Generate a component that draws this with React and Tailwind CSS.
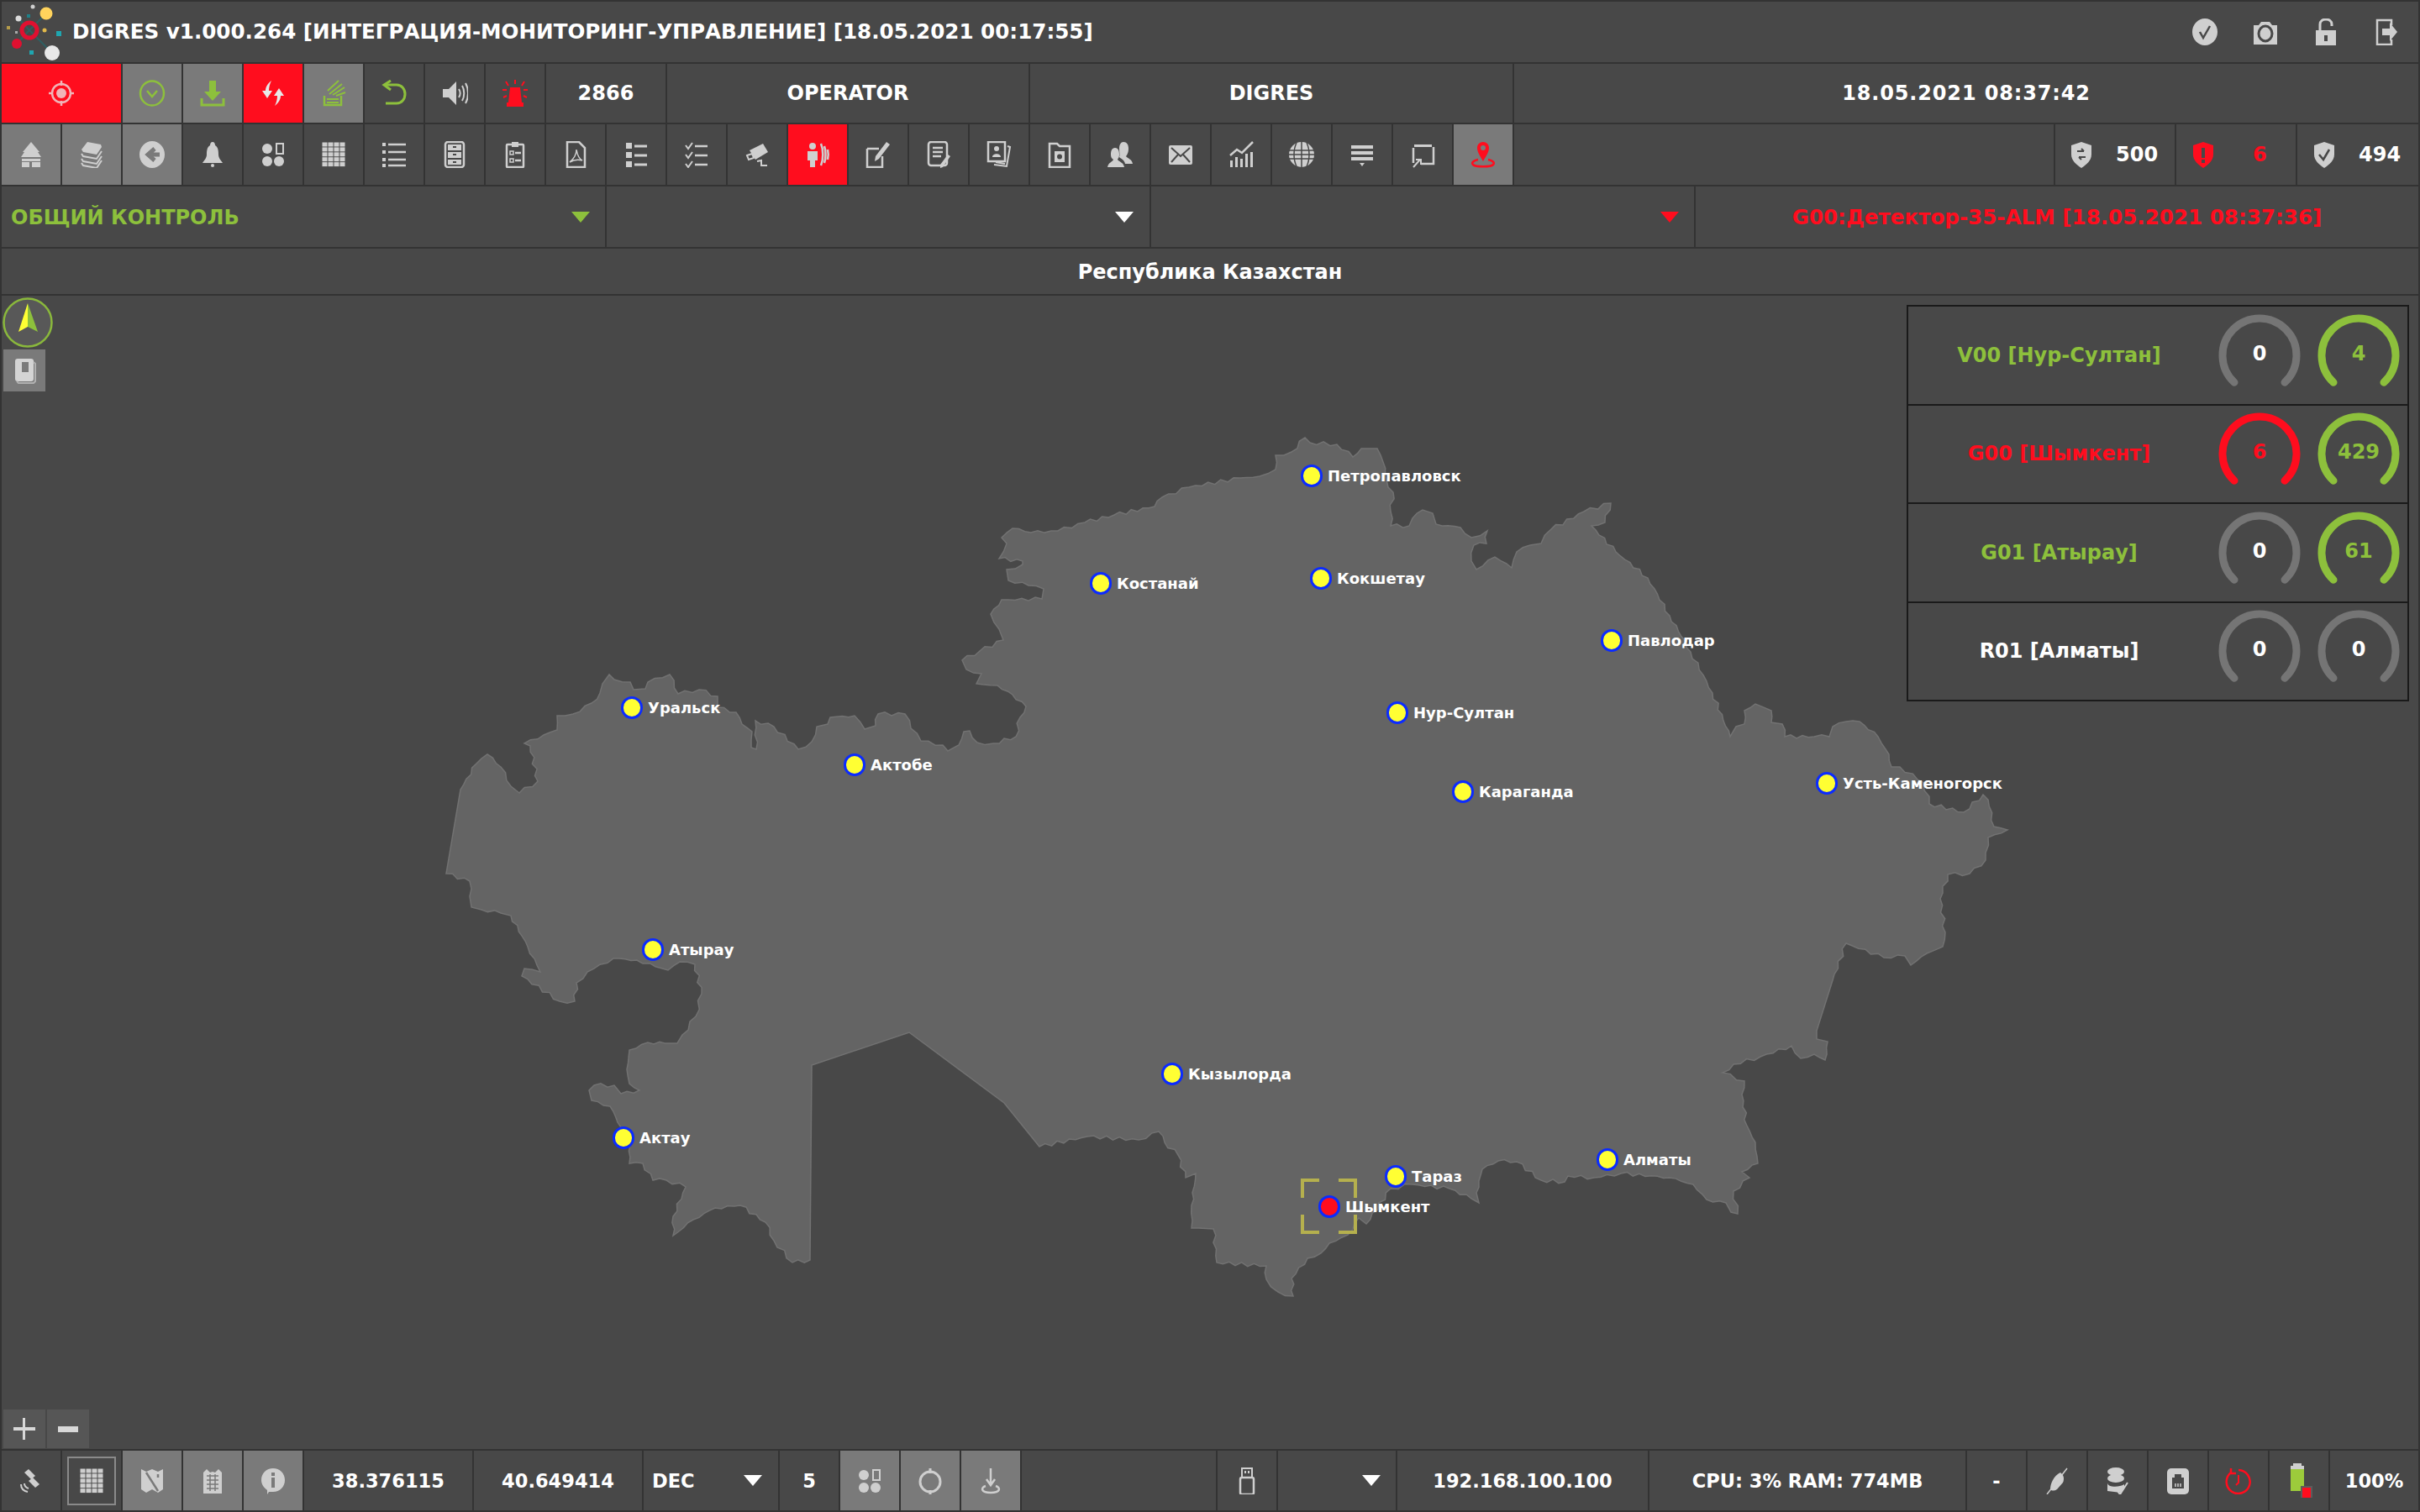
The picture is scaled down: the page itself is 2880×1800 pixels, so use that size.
import clsx from "clsx";
import { twMerge } from "tailwind-merge";

const S = { fill: "none", stroke: "currentColor", strokeWidth: 2.5 };

const gridCells = [];
for (let c = 0; c < 4; c++) {
    for (let r = 0; r < 5; r++) {
        gridCells.push(<rect key={c + "-" + r} x={2.5 + c * 7} y={1.5 + r * 5.9} width="6" height="5" />);
    }
}

const icons = {
    target: <><circle cx="16" cy="16" r="11" {...S} /><circle cx="16" cy="16" r="6" /><path d="M16 1v6M16 25v6M1 16h5M26 16h5" {...S} /></>,
    checkCircle: <><ellipse cx="16" cy="16" rx="14" ry="14.5" {...S} /><path d="M10 13l6 7 6-7" {...S} /></>,
    download: <><path d="M12 1h8v13h6L16 25 6 14h6z" /><path d="M3 22v8h26v-8" {...S} strokeWidth="3" /></>,
    swap: <><path d="M14 1C9 5 7 9 7 13H3l6 9 6-9h-4c0-4 1-8 3-12z" /><path d="M18 31c5-4 7-8 7-12h4l-6-9-6 9h4c0 4-1 8-3 12z" /></>,
    signal: <><path d="M5 19v11h20V19" {...S} /><path d="M8 23h14M8 27h14" {...S} strokeWidth="2" /><path d="M11 17L26 5M15 18L29 9M19 19L30 15M9 13L22 1" {...S} strokeWidth="2" /></>,
    undo: <><path d="M5 6h14c6 0 10 5 10 11s-4 11-10 11H6" {...S} strokeWidth="3" /><path d="M12 1L4 6l8 6" {...S} strokeWidth="3" /></>,
    speaker: <><path d="M2 11h7l9-9v28l-9-9H2z" /><path d="M21 11c2 3 2 7 0 10M25 7c3 5 3 13 0 18M29 4c4 7 4 17 0 24" {...S} strokeWidth="2" /></>,
    alarm: <><path d="M10 9h12l2 18H8z" /><path d="M6 27h20v5H6z" /><path d="M16 0v5M5 2l3 5M27 2l-3 5M1 12h5M26 12h5M2 21l4-2M30 21l-4-2" {...S} strokeWidth="2" /></>,
    home: <><path d="M16 1l10 12h-2l4 6H4l4-6H6z" /><path d="M5 21h22v3H5zM5 25h9v6H5zM17 25h10v6H17z" /></>,
    layers: <><path d="M11 1l16 3 1 3-6 9-16-3-2-3z" /><path d="M4 15l2 3 16 3 6-9M4 21l2 3 16 3 6-9M4 26l2 3 16 3 6-9" {...S} strokeWidth="2" /></>,
    arrowCircle: <><ellipse cx="16" cy="16" rx="15" ry="16" /><path d="M25 16H14M19 9l-8 7 8 7" fill="none" stroke="#7a7a7a" strokeWidth="5" /></>,
    bell: <><path d="M16 1c2 0 3 2 3 4 4 2 4 8 4 11 0 4 3 7 5 10H4c2-3 5-6 5-10 0-3 0-9 4-11 0-2 1-4 3-4z" /><circle cx="16" cy="29" r="2" /></>,
    dots: <><ellipse cx="9" cy="9" rx="6" ry="6" /><rect x="20" y="3" width="8" height="12" {...S} strokeWidth="2" /><ellipse cx="9" cy="24" rx="6" ry="6" /><ellipse cx="23" cy="24" rx="6" ry="6" /></>,
    grid: <>{gridCells}</>,
    list: <><path d="M2 2h4v4H2zM2 11h4v4H2zM2 20h4v4H2zM2 27h4v4H2z" /><path d="M9 4h21M9 13h21M9 22h21M9 29h21" {...S} /></>,
    cabinet: <><rect x="5" y="1" width="22" height="30" rx="3" {...S} /><path d="M8 4h16v7H8zM8 13h16v7H8zM8 22h16v6H8z" /><path d="M14 7h4M14 16h4M14 25h4" stroke="#484848" strokeWidth="2" /></>,
    clipboard: <><rect x="6" y="4" width="20" height="27" rx="1" {...S} /><path d="M12 1h8v6h-8z" /><path d="M10 12h4v4h-4zM10 21h4v4h-4z" {...S} strokeWidth="1.5" /><path d="M16 14h7M16 23h7" {...S} /></>,
    pdf: <><path d="M6 1h14l7 7v23H6z" {...S} /><path d="M17 10c0 6-3 11-8 15 5-3 11-3 15-2-4-2-6-7-7-13z" {...S} strokeWidth="1.5" /></>,
    bullets: <><path d="M4 2h7v7H4zM4 13h7v7H4zM4 24h7v7H4z" /><path d="M14 6h15M14 17h15M14 28h15" {...S} strokeWidth="3" /></>,
    checks: <><path d="M3 5l3 4 5-7M3 16l3 4 5-7M3 27l3 4 5-7" {...S} strokeWidth="2" /><path d="M14 6h15M14 17h15M14 28h15" {...S} /></>,
    cctv: <><path d="M7 11l16-8 6 10-15 9z" /><path d="M4 17l6-2 2 5-6 2zM16 24l5-1v6h7" {...S} strokeWidth="2" /></>,
    people: <><circle cx="10" cy="6" r="4" /><path d="M4 12h12v11h-3v8H7v-8H4z" /><path d="M20 3c3 7 3 19 0 26M24 6c2 5 2 15 0 20M28 10c1 4 1 8 0 12" {...S} strokeWidth="2.5" /></>,
    edit: <><path d="M3 9h14M3 9v22h18V18" {...S} /><path d="M26 1l4 3-13 17-5 3 1-6z" /></>,
    docEdit: <><rect x="4" y="1" width="22" height="28" rx="3" {...S} /><path d="M9 8h12M9 13h12M9 18h10" {...S} /><path d="M27 16l3 2-9 13-3 1v-4z" /></>,
    photos: <><rect x="3" y="1" width="20" height="23" {...S} /><path d="M13 6a3 3 0 110 6 3 3 0 010-6zM8 19c0-5 10-5 10 0z" /><path d="M26 6l3 1-4 23-15-2M23 27l-11-2" {...S} strokeWidth="2" /></>,
    cameraFolder: <><path d="M4 3h9l3 3h12v25H4z" {...S} /><rect x="10" y="12" width="12" height="13" /><circle cx="16" cy="18.500" r="3" fill="#484848" /></>,
    users: <><path d="M20 1c4 0 6 3 6 8 0 5-2 8-3 9 2 3 7 3 8 9h-9c-1-5-5-6-7-8 1-2 0-6 0-10 0-5 2-8 5-8z" /><path d="M10 8c4 0 5 4 5 8s-2 5-2 6c2 3 7 3 8 9H1c1-6 6-6 7-9-1-1-3-2-3-6s1-8 5-8z" /></>,
    mail: <><rect x="2" y="5" width="28" height="23" rx="2" /><path d="M5 8l11 10L27 8M5 25l8-9M27 25l-8-9" fill="none" stroke="#484848" strokeWidth="2" /></>,
    chart: <><path d="M3 23h3v8H3zM9 19h3v12H9zM15 21h3v10h-3zM21 15h3v16h-3zM27 13h3v18h-3z" /><path d="M3 17l8-7 6 4L30 1" {...S} /></>,
    globe: <><ellipse cx="16" cy="16" rx="15" ry="15" /><path d="M1 11h30M1 16h30M1 21h30M16 1v30M10 2c-4 8-4 20 0 28M22 2c4 8 4 20 0 28" fill="none" stroke="#484848" strokeWidth="1.500" /></>,
    lines: <><path d="M3 5h26v4H3zM3 12h26v4H3zM3 19h26v4H3z" /><path d="M13 26h6l-3 4z" /></>,
    cast: <><path d="M6 4h21v3H6z" /><path d="M5 8v18M29 7v20H14" {...S} /><path d="M5 31l8-9M8 22h6v6" {...S} strokeWidth="2" /></>,
    pin: <><path d="M16 1c4 0 7 3 7 7 0 5-4 11-7 16-3-5-7-11-7-16 0-4 3-7 7-7z" /><circle cx="16" cy="8" r="3" fill="#7a7a7a" /><path d="M10 22c-6 1-8 4-6 6 3 3 21 3 24 0 2-2 0-5-6-6" {...S} /></>,
    checkBadge: <><ellipse cx="16" cy="16" rx="15" ry="16" /><path d="M10 16l4 7 8-14" fill="none" stroke="#484848" strokeWidth="2.500" /></>,
    camera: <><path d="M2 8h6l3-4h10l3 4h6v23H2z" /><ellipse cx="16" cy="18" rx="8" ry="9" fill="none" stroke="#484848" strokeWidth="3" /></>,
    unlock: <><path d="M4 14h24v18H4z" /><path d="M9 14V7c0-8 14-8 14 0v2" {...S} strokeWidth="3" /><path d="M14 20h4v7h-4z" fill="#484848" /></>,
    logout: <><path d="M22 8V2H5v29h17v-6" {...S} /><path d="M11 12h9V5l9 11-9 11v-7h-9z" /></>,
    shieldSync: <><path d="M16 1l12 4v11c0 7-6 12-12 16C10 28 4 23 4 16V5z" /><path d="M11 12h8M19 12l-3-3M21 19h-8M13 19l3 3" fill="none" stroke="#484848" strokeWidth="2" /></>,
    shieldAlert: <><path d="M16 1l12 4v11c0 7-6 12-12 16C10 28 4 23 4 16V5z" /><path d="M14 8h4v12h-4zM14 22h4v4h-4z" fill="#484848" /></>,
    shieldCheck: <><path d="M16 1l12 4v11c0 7-6 12-12 16C10 28 4 23 4 16V5z" /><path d="M10 16l5 6 7-12" fill="none" stroke="#484848" strokeWidth="2.500" /></>,
    book: <><path d="M5 5c0-2 1-3 3-3h16c2 0 3 1 3 3v21c0 2-1 3-3 3H8c-2 0-3-1-3-3z" fill="#d4d4d4" /><path d="M13 6h8v12h-8z" fill="#7a7a7a" /><path d="M27 6l2 2v21l-2 2H9l-2-2" fill="none" stroke="#b0b0b0" strokeWidth="2" /></>,
    satellite: <><path d="M8 6l5-4 8 8-5 4zM13 16l5-4 8 8-5 4z" /><path d="M4 20c0 5 3 8 8 9M8 19c0 3 2 5 5 6" {...S} strokeWidth="2" /></>,
    mapShield: <><path d="M3 2l6 3 7-3 7 3 6-3v24l-6 4-7-4-7 4-6-4z" /><path d="M9 6l14 22M23 8v4" fill="none" stroke="#7a7a7a" strokeWidth="2.500" /></>,
    building: <><path d="M5 6l4-4 4 4 3-1 3 1 4-4 4 4v25H5z" /><path d="M9 10h14M9 15h14M9 20h14M9 25h14M13 8v20M19 8v20" fill="none" stroke="#7a7a7a" strokeWidth="1.500" /></>,
    info: <><path d="M16 1c8 0 14 6 14 14s-6 14-14 14h-5l-2 3v-5C5 24 2 20 2 15 2 7 8 1 16 1z" /><path d="M14 6h4v4h-4zM14 12h4v12h-4z" fill="#7a7a7a" /></>,
    ring: <><ellipse cx="16" cy="17" rx="12" ry="12" {...S} strokeWidth="3" /><path d="M16 1v6M16 27v5" {...S} strokeWidth="3" /></>,
    anchor: <><path d="M16 1v18M11 14l5 7 5-7" {...S} strokeWidth="2.500" /><path d="M10 22c-6 2-6 8 6 8s12-6 6-8" {...S} strokeWidth="2.500" /></>,
    usb: <><path d="M10 1h12v11H10z" {...S} strokeWidth="2" /><path d="M13 4h2v3h-2zM17 4h2v3h-2z" /><rect x="8" y="12" width="16" height="20" rx="2" {...S} /></>,
    unplug: <><path d="M20 6c4 3 5 7 3 12l-7 8c-3 2-6 2-8 0 0-7 4-16 12-20z" /><path d="M28 1L4 32" {...S} strokeWidth="1.500" /></>,
    database: <><ellipse cx="14" cy="5" rx="10" ry="5" /><ellipse cx="14" cy="13" rx="10" ry="5" /><path d="M4 18c0 6 14 6 20 2v4l-4 6-16-2z" /><path d="M16 28l3 4 9-14" {...S} strokeWidth="2" /></>,
    ethernet: <><rect x="3" y="1" width="26" height="31" rx="5" /><path d="M12 8h8v4h3v13H9V12h3z" fill="#484848" /><path d="M13 19v4M16 19v4M19 19v4" stroke="#cfcfcf" strokeWidth="1.500" /></>,
    clock: <><path d="M16 3a14 14 0 11-9 3M7 1v6h6" {...S} strokeWidth="2.500" /><path d="M16 9v9l-3 3" {...S} strokeWidth="2" /></>,
};

function Ic({ name, className }) {
    return (
        <svg viewBox="0 0 32 32" className={clsx("block h-8 w-8 shrink-0", className)} fill="currentColor" stroke="none">
            {icons[name]}
        </svg>
    );
}

const GREY = "text-[#cfcfcf]";
const GREEN = "text-[#8dc03c]";
const RED = "text-[#ff0d1e]";

function Cell({ tone, className, children }) {
    return (
        <div
            className={twMerge(
                "flex w-[70px] shrink-0 items-center justify-center bg-[#484848]",
                tone === "gray" && "bg-[#7a7a7a]",
                tone === "red" && "bg-[#ff0d1e]",
                className
            )}
        >
            {children}
        </div>
    );
}

const row2 = [
    { i: "checkCircle", tone: "gray", c: GREEN },
    { i: "download", tone: "gray", c: GREEN },
    { i: "swap", tone: "red", c: "text-[#e8e8e8]" },
    { i: "signal", tone: "gray", c: GREEN },
    { i: "undo", c: GREEN },
    { i: "speaker", c: GREY },
    { i: "alarm", c: RED },
];

const row3 = [
    { i: "home", tone: "gray" },
    { i: "layers", tone: "gray" },
    { i: "arrowCircle", tone: "gray" },
    { i: "bell" },
    { i: "dots" },
    { i: "grid" },
    { i: "list" },
    { i: "cabinet" },
    { i: "clipboard" },
    { i: "pdf" },
    { i: "bullets" },
    { i: "checks" },
    { i: "cctv" },
    { i: "people", tone: "red" },
    { i: "edit" },
    { i: "docEdit" },
    { i: "photos" },
    { i: "cameraFolder" },
    { i: "users" },
    { i: "mail" },
    { i: "chart" },
    { i: "globe" },
    { i: "lines" },
    { i: "cast" },
    { i: "pin", tone: "gray", c: RED },
];

const coast = "531,1040 548,940 567,909 580,898 596,913 608,936 618,944 640,930 631,888 624,885 647,875 663,869 663,852 682,850 704,837 714,825 717,814 725,803 731,809 750,812 754,821 768,820 771,812 797,803 807,826 832,821 854,829 854,842 876,848 883,862 895,871 894,890 900,892 899,858 921,865 950,892 966,883 972,865 985,862 988,854 1017,852 1029,868 1042,864 1045,850 1077,850 1084,867 1096,882 1122,887 1128,894 1141,887 1147,871 1154,870 1163,884 1182,885 1209,877 1214,854 1221,841 1205,827 1187,816 1162,814 1168,802 1150,797 1145,786 1166,775 1194,762 1189,749 1179,731 1192,714 1240,713 1242,701 1224,697 1200,691 1198,678 1217,672 1217,668 1189,665 1198,647 1192,640 1205,629 1227,634 1259,632 1291,622 1326,613 1374,603 1383,592 1415,580 1476,569 1499,567 1518,559 1518,542 1537,538 1553,521 1559,527 1591,529 1610,544 1620,534 1639,534 1646,550 1652,580 1658,586 1655,609 1655,626 1677,626 1681,617 1693,607 1705,611 1709,624 1738,628 1751,640 1770,632 1769,647 1754,649 1751,668 1757,678 1779,663 1799,676 1805,657 1821,649 1834,647 1846,630 1885,609 1917,599 1910,622 1894,626 1923,657 1961,688 1987,733 2012,776 2038,825 2059,877 2066,865 2076,862 2076,846 2089,838 2108,846 2108,860 2121,862 2124,877 2159,877 2177,877 2181,865 2197,859 2213,859 2235,877 2248,898 2251,913 2261,913 2290,932 2296,957 2337,967 2360,946 2366,952 2373,984 2389,988 2366,997 2363,1024 2344,1040 2318,1041 2312,1063 2309,1070 2315,1110 2312,1127 2293,1135 2274,1149 2267,1138 2242,1140 2197,1123 2181,1167 2162,1227 2162,1237 2175,1240 2172,1262 2159,1255 2143,1260 2132,1245 2095,1258 2063,1267 2050,1277 2076,1287 2073,1303 2079,1340 2089,1360 2092,1385 2073,1395 2082,1402 2063,1418 2068,1445 2060,1443 2054,1432 2031,1428 2015,1410 1987,1402 1929,1397 1897,1402 1866,1400 1862,1407 1834,1405 1805,1383 1783,1382 1764,1392 1757,1420 1760,1432 1751,1427 1725,1415 1681,1410 1655,1415 1626,1457 1617,1450 1604,1470 1582,1480 1572,1492 1556,1498 1537,1522 1539,1543 1521,1538 1507,1523 1507,1507 1448,1503 1444,1463 1418,1462 1418,1435 1423,1397 1411,1402 1402,1375 1386,1360 1379,1347 1355,1357 1294,1353 1237,1365 1195,1313 1082,1229 966,1268 964,1500 943,1503 921,1477 911,1455 881,1435 851,1438 825,1452 801,1471 801,1448 816,1413 793,1405 777,1405 765,1385 749,1385 750,1363 739,1342 726,1317 704,1310 701,1298 707,1292 731,1292 739,1302 761,1298 749,1290 746,1273 749,1250 771,1241 806,1242 812,1232 828,1210 835,1183 827,1148 809,1145 795,1155 758,1143 730,1141 699,1157 686,1170 684,1192 666,1192 621,1162 624,1153 643,1157 628,1127 608,1090 596,1087 573,1083 561,1080 559,1067 559,1049";

// the border in the picture is a rough pixel edge, long straight runs stay straight
function roughen(points) {
    const pts = points.split(" ").map((p) => p.split(",").map(Number));
    const out = [];
    pts.forEach(([x, y], i) => {
        const [nx, ny] = pts[(i + 1) % pts.length];
        const len = Math.hypot(nx - x, ny - y);
        out.push(x + "," + y);
        if (len > 62) return;
        const steps = Math.floor(len / 7);
        for (let s = 1; s < steps; s++) {
            const j = Math.sin(i * 12.9 + s * 78.2) * 2.2;
            const px = x + ((nx - x) * s) / steps - ((ny - y) / len) * j;
            const py = y + ((ny - y) * s) / steps + ((nx - x) / len) * j;
            out.push(px.toFixed(1) + "," + py.toFixed(1));
        }
    });
    return out.join(" ");
}

const cities = [
    { n: "Петропавловск", x: 1561, y: 566 },
    { n: "Костанай", x: 1310, y: 694 },
    { n: "Кокшетау", x: 1572, y: 688 },
    { n: "Павлодар", x: 1918, y: 762 },
    { n: "Уральск", x: 752, y: 842 },
    { n: "Нур-Султан", x: 1663, y: 848 },
    { n: "Актобе", x: 1017, y: 910 },
    { n: "Караганда", x: 1741, y: 942 },
    { n: "Усть-Каменогорск", x: 2174, y: 932 },
    { n: "Атырау", x: 777, y: 1130 },
    { n: "Кызылорда", x: 1395, y: 1278 },
    { n: "Актау", x: 742, y: 1354 },
    { n: "Алматы", x: 1913, y: 1380 },
    { n: "Тараз", x: 1661, y: 1400 },
    { n: "Шымкент", x: 1582, y: 1436, alarm: true },
];

const panels = [
    { label: "V00 [Нур-Султан]", color: GREEN, a: 0, aTone: "off", b: 4, bTone: "ok" },
    { label: "G00 [Шымкент]", color: RED, a: 6, aTone: "bad", b: 429, bTone: "ok" },
    { label: "G01 [Атырау]", color: GREEN, a: 0, aTone: "off", b: 61, bTone: "ok" },
    { label: "R01 [Алматы]", color: "text-white", a: 0, aTone: "off", b: 0, bTone: "off" },
];

function Gauge({ value, tone }) {
    const stroke = tone === "ok" ? "text-[#8dc03c]" : tone === "bad" ? "text-[#ff0d1e]" : "text-[#757575]";
    const txt = tone === "off" ? "text-white" : stroke;
    return (
        <div className="relative h-[98px] w-[98px]">
            <svg viewBox="0 0 98 98" className={clsx("block h-[98px] w-[98px]", stroke)}>
                <path d="M19 81.200A44 44 0 1 1 79 81.200" fill="none" stroke="currentColor" strokeWidth="9" strokeLinecap="round" />
            </svg>
            <div className={clsx("absolute inset-0 flex items-center justify-center pb-[4px] text-[24px] font-bold", txt)}>{value}</div>
        </div>
    );
}

function Caret({ className }) {
    return (
        <svg viewBox="0 0 22 13" className={clsx("block h-[13px] w-[22px]", className)} fill="currentColor">
            <path d="M0 0h22L11 13z" />
        </svg>
    );
}

function Logo() {
    return (
        <svg viewBox="0 0 72 74" className="block h-[74px] w-[72px] shrink-0">
            <path d="M33 35L18 51M33 35L60 62M33 35L53 15M33 35L20 21" stroke="#2f5f62" strokeWidth="2" />
            <circle cx="33" cy="35" r="9" fill="none" stroke="#e01030" strokeWidth="5" />
            <circle cx="53" cy="15" r="7.500" fill="#ffd35c" />
            <circle cx="60" cy="62" r="9" fill="#e8e8e8" />
            <circle cx="18" cy="51" r="6" fill="#e01030" />
            <circle cx="20" cy="21" r="3.500" fill="#dcdcdc" />
            <circle cx="37" cy="7" r="2.500" fill="#cfcfcf" />
            <circle cx="51" cy="35" r="2.500" fill="#e2b94a" />
            <rect x="65" y="36" width="6" height="6" fill="#1fa6b0" />
            <rect x="33" y="59" width="5" height="5" fill="#1fa6b0" />
            <rect x="30" y="16" width="4" height="4" fill="#1f8088" />
            <rect x="6" y="30" width="4" height="4" fill="#b49b4a" />
            <rect x="16" y="36" width="3" height="3" fill="#aaaaaa" />
        </svg>
    );
}

export default function App() {
    return (
        <div className="flex h-screen w-screen flex-col gap-[2px] overflow-hidden bg-[#333333] p-[2px] font-['DejaVu_Sans',sans-serif] text-[24px] font-bold leading-none text-white">
            {/* Title */}
            <div className="flex h-[72px] shrink-0 items-center bg-[#484848]">
                <Logo />
                <span className="ml-[12px] text-[24.6px]">DIGRES v1.000.264 [ИНТЕГРАЦИЯ-МОНИТОРИНГ-УПРАВЛЕНИЕ] [18.05.2021 00:17:55]</span>
                <div className="ml-auto flex pr-[2px]">
                    {["checkBadge", "camera", "unlock", "logout"].map((n) => (
                        <div key={n} className="flex h-[72px] w-[72px] items-center justify-center">
                            <Ic name={n} className={GREY} />
                        </div>
                    ))}
                </div>
            </div>

            {/* Status */}
            <div className="flex h-[70px] shrink-0 gap-[2px]">
                <Cell tone="red" className="w-[142px]">
                    <Ic name="target" className="text-[#f0b4b8]" />
                </Cell>
                {row2.map((b) => (
                    <Cell key={b.i} tone={b.tone}>
                        <Ic name={b.i} className={b.c} />
                    </Cell>
                ))}
                <Cell className="w-[142px]">2866</Cell>
                <Cell className="w-[430px]">OPERATOR</Cell>
                <Cell className="w-[574px]">DIGRES</Cell>
                <Cell className="w-auto min-w-0 flex-1 tracking-[0.85px]">18.05.2021 08:37:42</Cell>
            </div>

            {/* Toolbar */}
            <div className="flex h-[72px] shrink-0 gap-[2px]">
                {row3.map((b) => (
                    <Cell key={b.i} tone={b.tone}>
                        <Ic name={b.i} className={b.c || GREY} />
                    </Cell>
                ))}
                <div className="min-w-0 flex-1 bg-[#484848]" />
                <Cell className="w-[142px] justify-start gap-[25px] pl-[15px]">
                    <Ic name="shieldSync" className={GREY} />
                    <span>500</span>
                </Cell>
                <Cell className="w-[142px] justify-start gap-[43px] pl-[16px] text-[#ff0d1e]">
                    <Ic name="shieldAlert" className={RED} />
                    <span>6</span>
                </Cell>
                <Cell className="w-[144px] justify-start gap-[25px] pl-[16px]">
                    <Ic name="shieldCheck" className={GREY} />
                    <span>494</span>
                </Cell>
            </div>

            {/* Selectors */}
            <div className="flex h-[72px] shrink-0 gap-[2px]">
                <div className="flex w-[718px] shrink-0 items-center justify-between bg-[#484848] pl-[11px] pr-[18px] text-[#8dc03c]">
                    <span className="pt-[2px]">ОБЩИЙ КОНТРОЛЬ</span>
                    <Caret />
                </div>
                <div className="flex w-[646px] shrink-0 items-center justify-end bg-[#484848] pr-[19px]">
                    <Caret />
                </div>
                <div className="flex w-[646px] shrink-0 items-center justify-end bg-[#484848] pr-[18px] text-[#ff0d1e]">
                    <Caret />
                </div>
                <div className="flex min-w-0 flex-1 items-center justify-center bg-[#484848] pt-[2px] text-[24.6px] text-[#ff0d1e]">
                    G00:Детектор-35-ALM [18.05.2021 08:37:36]
                </div>
            </div>

            <div className="flex h-[54px] shrink-0 items-center justify-center bg-[#484848] pt-[2px]">Республика Казахстан</div>

            {/* Map */}
            <div className="relative min-h-0 flex-1 overflow-hidden bg-[#484848]">
                <svg viewBox="2 352 2876 1373" className="absolute inset-0 block h-full w-full">
                    <polygon points={roughen(coast)} fill="#646464" stroke="#727272" strokeWidth="1.500" />
                    <path
                        d="M1550 1426v-21h20M1593 1405h20v21M1550 1446v21h20M1593 1467h20v-21"
                        fill="none"
                        stroke="#b5b04e"
                        strokeWidth="4"
                    />
                </svg>

                {cities.map((c) => (
                    <div
                        key={c.n}
                        className="absolute flex items-center gap-[6px] text-[18px]"
                        style={{ left: c.x - 15, top: c.y - 365 }}
                    >
                        <div
                            className={clsx(
                                "h-[27px] w-[26px] rounded-full border-[3.5px] border-[#0b2bff]",
                                c.alarm ? "bg-[#ff0d1e]" : "bg-[#ffff33]"
                            )}
                        />
                        <span>{c.n}</span>
                    </div>
                ))}

                <div className="absolute left-[1px] top-[2px]">
                    <svg viewBox="0 0 60 60" className="block h-[60px] w-[60px]">
                        <circle cx="30" cy="30" r="28.500" fill="#585858" stroke="#8ab83c" strokeWidth="2.500" />
                        <path d="M30 7L19 41l11-6z" fill="#ffff33" />
                        <path d="M30 7l12 34-12-6z" fill="#8dc03c" />
                    </svg>
                </div>
                <div className="absolute left-[2px] top-[64px] flex h-[50px] w-[50px] items-center justify-center bg-[#7a7a7a]">
                    <Ic name="book" />
                </div>

                <div className="absolute bottom-[1px] left-[2px] flex gap-[2px]">
                    <div className="flex h-[46px] w-[50px] items-center justify-center bg-[#565656]">
                        <svg viewBox="0 0 26 26" className="block h-[26px] w-[26px] text-[#d8d8d8]" fill="currentColor">
                            <path d="M11 0h3v11h12v4H14v11h-3V15H0v-4h11z" />
                        </svg>
                    </div>
                    <div className="flex h-[46px] w-[50px] items-center justify-center bg-[#565656]">
                        <div className="h-[7px] w-[24px] bg-[#d8d8d8]" />
                    </div>
                </div>

                {/* Gauges */}
                <div className="absolute right-[11px] top-[11px] flex h-[472px] w-[598px] flex-col border-2 border-[#1a1a1a]">
                    {panels.map((p, idx) => (
                        <div
                            key={p.label}
                            className={clsx(
                                "flex min-h-0 flex-1 items-center bg-[#484848] pl-[8px] pr-[9px]",
                                idx < 3 && "border-b-2 border-[#1a1a1a]"
                            )}
                        >
                            <span className={clsx("flex-1 pr-[18px] text-center text-[24px]", p.color)}>{p.label}</span>
                            <div className="flex gap-[20px]">
                                <Gauge value={p.a} tone={p.aTone} />
                                <Gauge value={p.b} tone={p.bTone} />
                            </div>
                        </div>
                    ))}
                </div>
            </div>

            {/* Bottom bar */}
            <div className="flex h-[71px] shrink-0 gap-[2px] text-[22.5px]">
                <Cell><Ic name="satellite" className={GREY} /></Cell>
                <Cell>
                    <div className="flex h-[58px] w-[58px] items-center justify-center border-2 border-[#8a8a8a]">
                        <Ic name="grid" className={GREY} />
                    </div>
                </Cell>
                <Cell tone="gray"><Ic name="mapShield" className={GREY} /></Cell>
                <Cell tone="gray"><Ic name="building" className={GREY} /></Cell>
                <Cell tone="gray"><Ic name="info" className={GREY} /></Cell>
                <Cell className="w-[200px] pt-[2px]">38.376115</Cell>
                <Cell className="w-[200px] pt-[2px]">40.649414</Cell>
                <Cell className="w-[160px] justify-between pl-[10px] pr-[19px]">
                    <span className="pt-[2px]">DEC</span>
                    <Caret />
                </Cell>
                <Cell className="pt-[2px]">5</Cell>
                <Cell tone="gray"><Ic name="dots" className={GREY} /></Cell>
                <Cell tone="gray"><Ic name="ring" className={GREY} /></Cell>
                <Cell tone="gray"><Ic name="anchor" className={GREY} /></Cell>
                <div className="min-w-0 flex-1 bg-[#484848]" />
                <Cell><Ic name="usb" className={GREY} /></Cell>
                <Cell className="w-[140px] justify-end pr-[18px]"><Caret /></Cell>
                <Cell className="w-[298px] pt-[2px]">192.168.100.100</Cell>
                <Cell className="w-[376px] pt-[2px]">CPU: 3% RAM: 774MB</Cell>
                <Cell className="pt-[2px]">-</Cell>
                <Cell><Ic name="unplug" className={GREY} /></Cell>
                <Cell><Ic name="database" className={GREY} /></Cell>
                <Cell><Ic name="ethernet" className={GREY} /></Cell>
                <Cell><Ic name="clock" className={RED} /></Cell>
                <Cell>
                    <svg viewBox="0 0 32 44" className="block h-[44px] w-[32px]">
                        <path d="M9 1h10v3h3v30H6V4h3z" fill="#cfcfcf" />
                        <path d="M6 8h16v26H6z" fill="#9ccb3b" />
                        <path d="M18 28h14v14H18z" fill="#5c5c5c" />
                        <path d="M20 30h10v12H20z" fill="#ff0d1e" />
                    </svg>
                </Cell>
                <div className="flex w-[105px] shrink-0 items-center justify-center bg-[#484848] pt-[2px]">100%</div>
            </div>
        </div>
    );
}
